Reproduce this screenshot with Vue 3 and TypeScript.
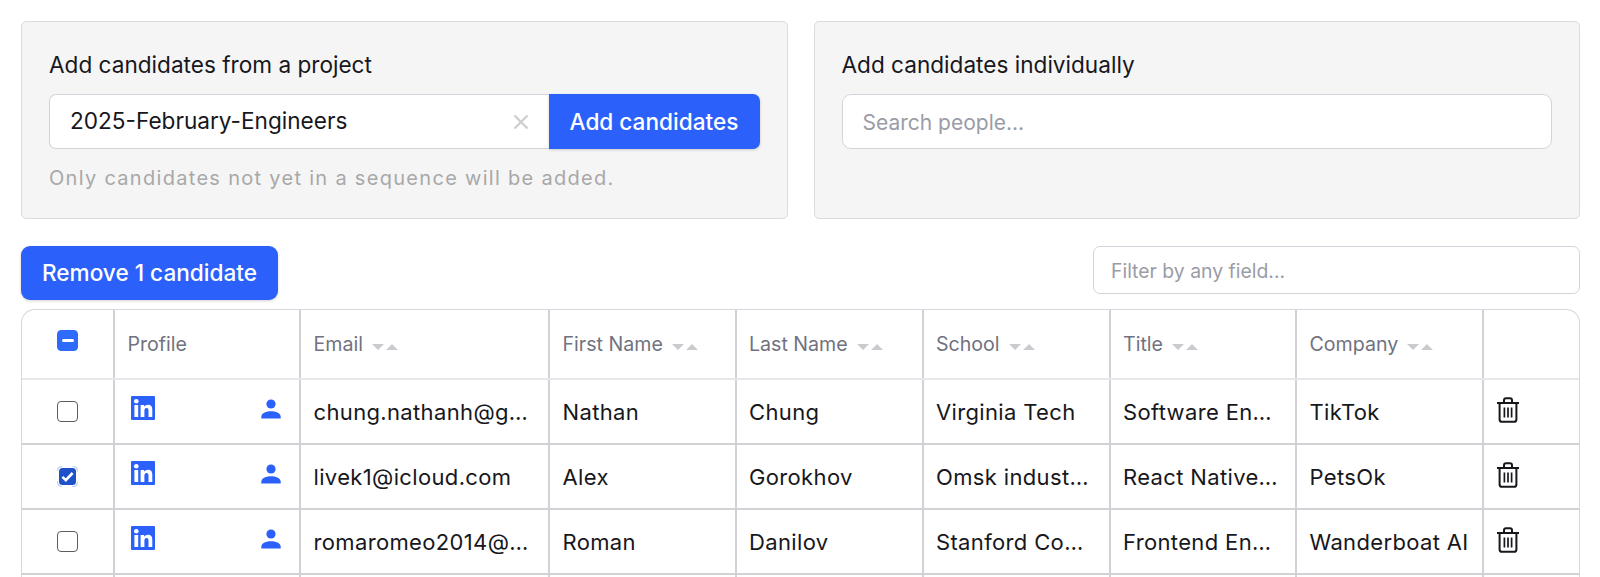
<script setup lang="ts">
interface Candidate {
  email: string
  firstName: string
  lastName: string
  school: string
  title: string
  company: string
  checked?: boolean
}

const columns = ['Email', 'First Name', 'Last Name', 'School', 'Title', 'Company']

const candidates: Candidate[] = [
  { email: 'chung.nathanh@gmail.com', firstName: 'Nathan', lastName: 'Chung', school: 'Virginia Tech', title: 'Software Engineer', company: 'TikTok' },
  { email: 'livek1@icloud.com', firstName: 'Alex', lastName: 'Gorokhov', school: 'Omsk industrial', title: 'React Native Dev', company: 'PetsOk', checked: true },
  { email: 'romaromeo2014@gmail.com', firstName: 'Roman', lastName: 'Danilov', school: 'Stanford Computer Science', title: 'Frontend Engineer', company: 'Wanderboat AI' },
]
</script>

<template>
  <div class="page">
    <div class="panels">
      <section class="panel">
        <h2 class="panel-title">Add candidates from a project</h2>
        <div class="project-row">
          <div class="combo">
            <span class="combo-value">2025-February-Engineers</span>
            <svg class="combo-clear" viewBox="0 0 16 16" width="16" height="16">
              <path d="M1.5 1.5l13 13M14.5 1.5l-13 13" fill="none" stroke="#cfcfcf" stroke-width="2.4" />
            </svg>
          </div>
          <button class="btn btn-attached" type="button">Add candidates</button>
        </div>
        <p class="hint">Only candidates not yet in a sequence will be added.</p>
      </section>
      <section class="panel">
        <h2 class="panel-title">Add candidates individually</h2>
        <input class="search" type="text" placeholder="Search people..." />
      </section>
    </div>

    <div class="toolbar">
      <button class="btn btn-remove" type="button">Remove 1 candidate</button>
      <input class="filter" type="text" placeholder="Filter by any field..." />
    </div>

    <div class="table-wrap">
      <table class="table">
        <colgroup>
          <col style="width: 92px" />
          <col style="width: 186px" />
          <col style="width: 249px" />
          <col style="width: 186.5px" />
          <col style="width: 187px" />
          <col style="width: 187px" />
          <col style="width: 186.5px" />
          <col style="width: 187px" />
          <col />
        </colgroup>
        <thead>
          <tr>
            <th class="cell-check">
              <span class="box box-mixed"><i></i></span>
            </th>
            <th>Profile</th>
            <th v-for="col in columns" :key="col">
              <span class="th-label">{{ col }}</span>
              <svg class="sort" viewBox="0 0 26 8" width="26" height="8">
                <path d="M0 1h12L6 7zM14 7h12L20 1z" fill="#cbcbcf" />
              </svg>
            </th>
            <th></th>
          </tr>
        </thead>
        <tbody>
          <tr v-for="c in candidates" :key="c.email">
            <td class="cell-check">
              <span v-if="c.checked" class="box-focus">
                <svg viewBox="0 0 21 21" width="21" height="21">
                  <rect x=".5" y=".5" width="20" height="20" rx="4" fill="none" stroke="#a9c1fb" stroke-dasharray="8 10.28" stroke-dashoffset="-11.14" />
                  <rect x="2" y="2" width="17" height="17" rx="3.5" fill="#1f52c9" />
                  <path d="M5.4 10.8l3.4 3.4L15.6 7" fill="none" stroke="#fff" stroke-width="2.6" />
                </svg>
              </span>
              <span v-else class="box"></span>
            </td>
            <td>
              <div class="profile">
                <svg viewBox="0 0 24 24" width="24" height="24">
                  <rect width="24" height="24" rx="1" fill="#2b61fa" />
                  <circle cx="5.3" cy="5.2" r="2.3" fill="#fff" />
                  <path d="M3.4 9h3.8v12H3.4zM9.6 9h3.6v1.7c.6-1 1.9-2 3.8-2 3.6 0 4.3 2.4 4.3 5.5V21h-3.8v-6c0-1.5-.1-3.1-1.9-3.1s-2.2 1.4-2.2 3V21H9.6z" fill="#fff" />
                </svg>
                <svg class="person" viewBox="0 0 20 20" width="20" height="20">
                  <circle cx="10" cy="5" r="4.6" fill="#2b61fa" />
                  <path d="M.3 19.6v-2c0-3.6 5.4-5.4 9.7-5.4s9.7 1.8 9.7 5.4v2z" fill="#2b61fa" />
                </svg>
              </div>
            </td>
            <td><div class="trunc">{{ c.email }}</div></td>
            <td><div class="trunc">{{ c.firstName }}</div></td>
            <td><div class="trunc">{{ c.lastName }}</div></td>
            <td><div class="trunc">{{ c.school }}</div></td>
            <td><div class="trunc">{{ c.title }}</div></td>
            <td class="cell-company"><div class="trunc">{{ c.company }}</div></td>
            <td class="cell-trash">
              <svg viewBox="0 0 24 26" width="24" height="26" fill="none" stroke="#17171c" stroke-width="2">
                <path d="M1 6h22M8 5.6V3.2C8 2 8.8 1.2 10 1.2h4c1.2 0 2 .8 2 2v2.4" />
                <path d="M3.6 6v16.4c0 1.4 1 2.4 2.4 2.4h12c1.4 0 2.4-1 2.4-2.4V6" />
                <path d="M8.4 10.5v10M12 10.5v10M15.6 10.5v10" stroke-width="1.7" />
              </svg>
            </td>
          </tr>
          <tr>
            <td v-for="n in 9" :key="n"></td>
          </tr>
        </tbody>
      </table>
    </div>
  </div>
</template>

<style>
html,
body {
  margin: 0;
  overflow: hidden;
  background: #fff;
}
</style>

<style scoped>
.page {
  padding: 21px 20px 0 21px;
  font-family: Inter, "Liberation Sans", sans-serif;
  color: #17171c;
}

.panels {
  display: grid;
  grid-template-columns: 1fr 1fr;
  gap: 26px;
}

.panel {
  height: 198px;
  box-sizing: border-box;
  padding: 28px 27px;
  background: #f5f5f5;
  border: 1.5px solid #dcdcdc;
  border-radius: 5px;
}

.panel-title {
  margin: 0 0 14px;
  font-size: 22.6px;
  font-weight: 400;
  line-height: 30px;
}

.project-row {
  display: flex;
  height: 55px;
}

.combo {
  flex: 1;
  display: flex;
  align-items: center;
  justify-content: space-between;
  padding: 0 20px 0 20px;
  background: #fff;
  border: 1.5px solid #d1d5db;
  border-right: 0;
  border-radius: 7px 0 0 7px;
}

.combo-value {
  margin-top: -3px;
  font-size: 22.6px;
}

.btn {
  border: 0;
  color: #fff;
  background: #2b61fa;
  font-family: inherit;
  font-size: 22.6px;
  font-weight: 500;
  box-shadow: 0 1px 3px rgba(0, 0, 0, 0.18);
}

.btn-attached {
  width: 211px;
  border-radius: 0 7px 7px 0;
}

.hint {
  margin: 14px 0 0;
  font-size: 20px;
  line-height: 30px;
  letter-spacing: 1.3px;
  color: #a8a8a8;
}

.search,
.filter {
  display: block;
  box-sizing: border-box;
  width: 100%;
  background: #fff;
  border: 1.5px solid #d1d5db;
  font-family: inherit;
  outline: none;
}

.search {
  height: 55px;
  padding: 2px 20px 0;
  border-radius: 9px;
  font-size: 21px;
}

.search::placeholder,
.filter::placeholder {
  color: #9a9ca6;
  opacity: 1;
}

.toolbar {
  display: flex;
  align-items: flex-start;
  justify-content: space-between;
  margin-top: 27px;
}

.btn-remove {
  width: 257px;
  height: 54px;
  padding-bottom: 2px;
  border-radius: 9px;
}

.filter {
  width: 487px;
  height: 48px;
  padding: 2px 17px 0;
  border-radius: 7px;
  font-size: 19.4px;
}

.table-wrap {
  margin-top: 9px;
  height: 268px;
  box-sizing: border-box;
  border: 1.5px solid #d5d7de;
  border-bottom: 0;
  border-radius: 14px 14px 0 0;
  overflow: hidden;
}

.table {
  width: 100%;
  table-layout: fixed;
  border-collapse: collapse;
}

th,
td {
  padding: 0 0 0 12.5px;
  border-right: 2px solid #d2d2d6;
  border-bottom: 2px solid #d2d2d6;
  text-align: left;
  box-sizing: border-box;
}

th:last-child,
td:last-child {
  border-right: 0;
}

thead th {
  height: 69px;
  border-bottom-color: #e6e7eb;
  font-size: 19.6px;
  font-weight: 400;
  color: #70727f;
}

td {
  height: 65px;
  font-size: 22px;
  letter-spacing: 0.35px;
}

.th-label {
  margin-right: 9px;
}

.sort {
  vertical-align: 0;
}

.cell-check {
  padding-left: 0;
  text-align: center;
}

.box {
  display: inline-flex;
  align-items: center;
  justify-content: center;
  box-sizing: border-box;
  width: 21px;
  height: 21px;
  margin-bottom: 3px;
  border: 1.5px solid #5c5c60;
  border-radius: 4px;
  background: #fff;
  vertical-align: middle;
}

.box-mixed {
  margin-bottom: 8px;
  background: #2f6bfa;
  border-color: #2f6bfa;
}

.box-mixed i {
  display: block;
  width: 12px;
  height: 3px;
  border-radius: 1.5px;
  background: #fff;
}

.box-focus {
  display: inline-block;
  height: 21px;
  margin-bottom: 3px;
  vertical-align: middle;
}

.box-focus svg {
  display: block;
}

.profile {
  display: flex;
  align-items: flex-start;
  justify-content: space-between;
  height: 30px;
  margin-top: -2px;
  padding: 0 18px 0 3px;
}

.person {
  margin-top: 3px;
}

.trunc {
  overflow: hidden;
  white-space: nowrap;
  text-overflow: ellipsis;
  padding-right: 13px;
}

.cell-company .trunc {
  padding-right: 5px;
}

.cell-trash {
  padding-left: 12px;
}

.cell-trash svg {
  display: block;
  margin-bottom: 4px;
}
</style>
